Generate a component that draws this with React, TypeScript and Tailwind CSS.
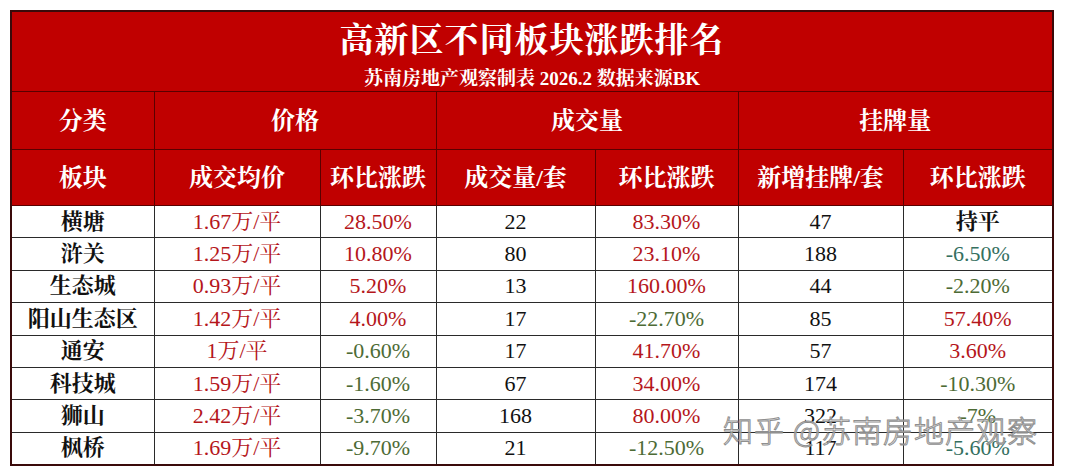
import React from "react";

type Cell = { t: string; c?: "r" | "g" | "t" | "k"; b?: boolean };

const rows: { name: string; cells: Cell[] }[] = [
  { name: "横塘", cells: [{ t: "1.67万/平", c: "r" }, { t: "28.50%", c: "r" }, { t: "22" }, { t: "83.30%", c: "r" }, { t: "47" }, { t: "持平", b: true }] },
  { name: "浒关", cells: [{ t: "1.25万/平", c: "r" }, { t: "10.80%", c: "r" }, { t: "80" }, { t: "23.10%", c: "r" }, { t: "188" }, { t: "-6.50%", c: "t" }] },
  { name: "生态城", cells: [{ t: "0.93万/平", c: "r" }, { t: "5.20%", c: "r" }, { t: "13" }, { t: "160.00%", c: "r" }, { t: "44" }, { t: "-2.20%", c: "g" }] },
  { name: "阳山生态区", cells: [{ t: "1.42万/平", c: "r" }, { t: "4.00%", c: "r" }, { t: "17" }, { t: "-22.70%", c: "g" }, { t: "85" }, { t: "57.40%", c: "r" }] },
  { name: "通安", cells: [{ t: "1万/平", c: "r" }, { t: "-0.60%", c: "g" }, { t: "17" }, { t: "41.70%", c: "r" }, { t: "57" }, { t: "3.60%", c: "r" }] },
  { name: "科技城", cells: [{ t: "1.59万/平", c: "r" }, { t: "-1.60%", c: "g" }, { t: "67" }, { t: "34.00%", c: "r" }, { t: "174" }, { t: "-10.30%", c: "g" }] },
  { name: "狮山", cells: [{ t: "2.42万/平", c: "r" }, { t: "-3.70%", c: "g" }, { t: "168" }, { t: "80.00%", c: "r" }, { t: "322" }, { t: "-7%", c: "g" }] },
  { name: "枫桥", cells: [{ t: "1.69万/平", c: "r" }, { t: "-9.70%", c: "g" }, { t: "21" }, { t: "-12.50%", c: "g" }, { t: "117" }, { t: "-5.60%", c: "t" }] },
];

const colorClass = (c?: Cell["c"]) =>
  c === "r" ? "text-[#b5161b]" : c === "g" ? "text-[#4d6b35]" : c === "t" ? "text-[#35705f]" : "text-[#111111]";

export default function App() {
  return (
    <div className="relative w-[1080px] h-[474px] bg-white overflow-hidden [font-family:'Liberation_Serif','Noto_Serif_CJK_SC','Noto_Sans_CJK_SC',serif]">
      <div className="pt-[10px] pl-[10px]">
        <table className="border-collapse table-fixed w-[1042px] border-2 border-[#3a0a0a]">
          <colgroup>
            <col className="w-[143px]" />
            <col className="w-[166px]" />
            <col className="w-[116px]" />
            <col className="w-[159px]" />
            <col className="w-[143px]" />
            <col className="w-[165px]" />
            <col className="w-[150px]" />
          </colgroup>
          <thead>
            <tr className="h-[80px] bg-[#c00000]">
              <th colSpan={7} className="border border-[#5a0000] text-white p-0 align-top">
                <div className="flex flex-col items-center pt-[9px]">
                  <div className="text-[34px] font-bold leading-[40px] tracking-[1px]">高新区不同板块涨跌排名</div>
                  <div className="text-[19px] font-bold leading-[24px] mt-[6px]">苏南房地产观察制表 2026.2 数据来源BK</div>
                </div>
              </th>
            </tr>
            <tr className="h-[58px] bg-[#c00000] text-white text-[24px] font-bold">
              <th className="border border-[#5a0000] p-0">分类</th>
              <th colSpan={2} className="border border-[#5a0000] p-0">价格</th>
              <th colSpan={2} className="border border-[#5a0000] p-0">成交量</th>
              <th colSpan={2} className="border border-[#5a0000] p-0">挂牌量</th>
            </tr>
            <tr className="h-[56px] bg-[#c00000] text-white text-[24px] font-bold">
              <th className="border border-[#5a0000] p-0">板块</th>
              <th className="border border-[#5a0000] p-0">成交均价</th>
              <th className="border border-[#5a0000] p-0">环比涨跌</th>
              <th className="border border-[#5a0000] p-0">成交量/套</th>
              <th className="border border-[#5a0000] p-0">环比涨跌</th>
              <th className="border border-[#5a0000] p-0">新增挂牌/套</th>
              <th className="border border-[#5a0000] p-0">环比涨跌</th>
            </tr>
          </thead>
          <tbody>
            {rows.map((r) => (
              <tr key={r.name} className="h-[32.4px] bg-white">
                <td className="border border-[#2a2a2a] p-0 text-center text-[22px] leading-[30px] font-bold text-[#111111]">{r.name}</td>
                {r.cells.map((c, i) => (
                  <td
                    key={i}
                    className={`border border-[#2a2a2a] p-0 text-center text-[22px] leading-[30px] ${c.b ? "font-bold" : "font-normal"} ${colorClass(c.c)}`}
                  >
                    {c.t}
                  </td>
                ))}
              </tr>
            ))}
          </tbody>
        </table>
      </div>
      <div className="absolute left-[723px] top-[409px] text-[30px] leading-[40px] tracking-[1px] text-white/50 [-webkit-text-stroke:1px_#8f8f8f] [font-family:'Noto_Sans_CJK_SC',sans-serif] font-light pointer-events-none">
        知乎 @苏南房地产观察
      </div>
    </div>
  );
}
